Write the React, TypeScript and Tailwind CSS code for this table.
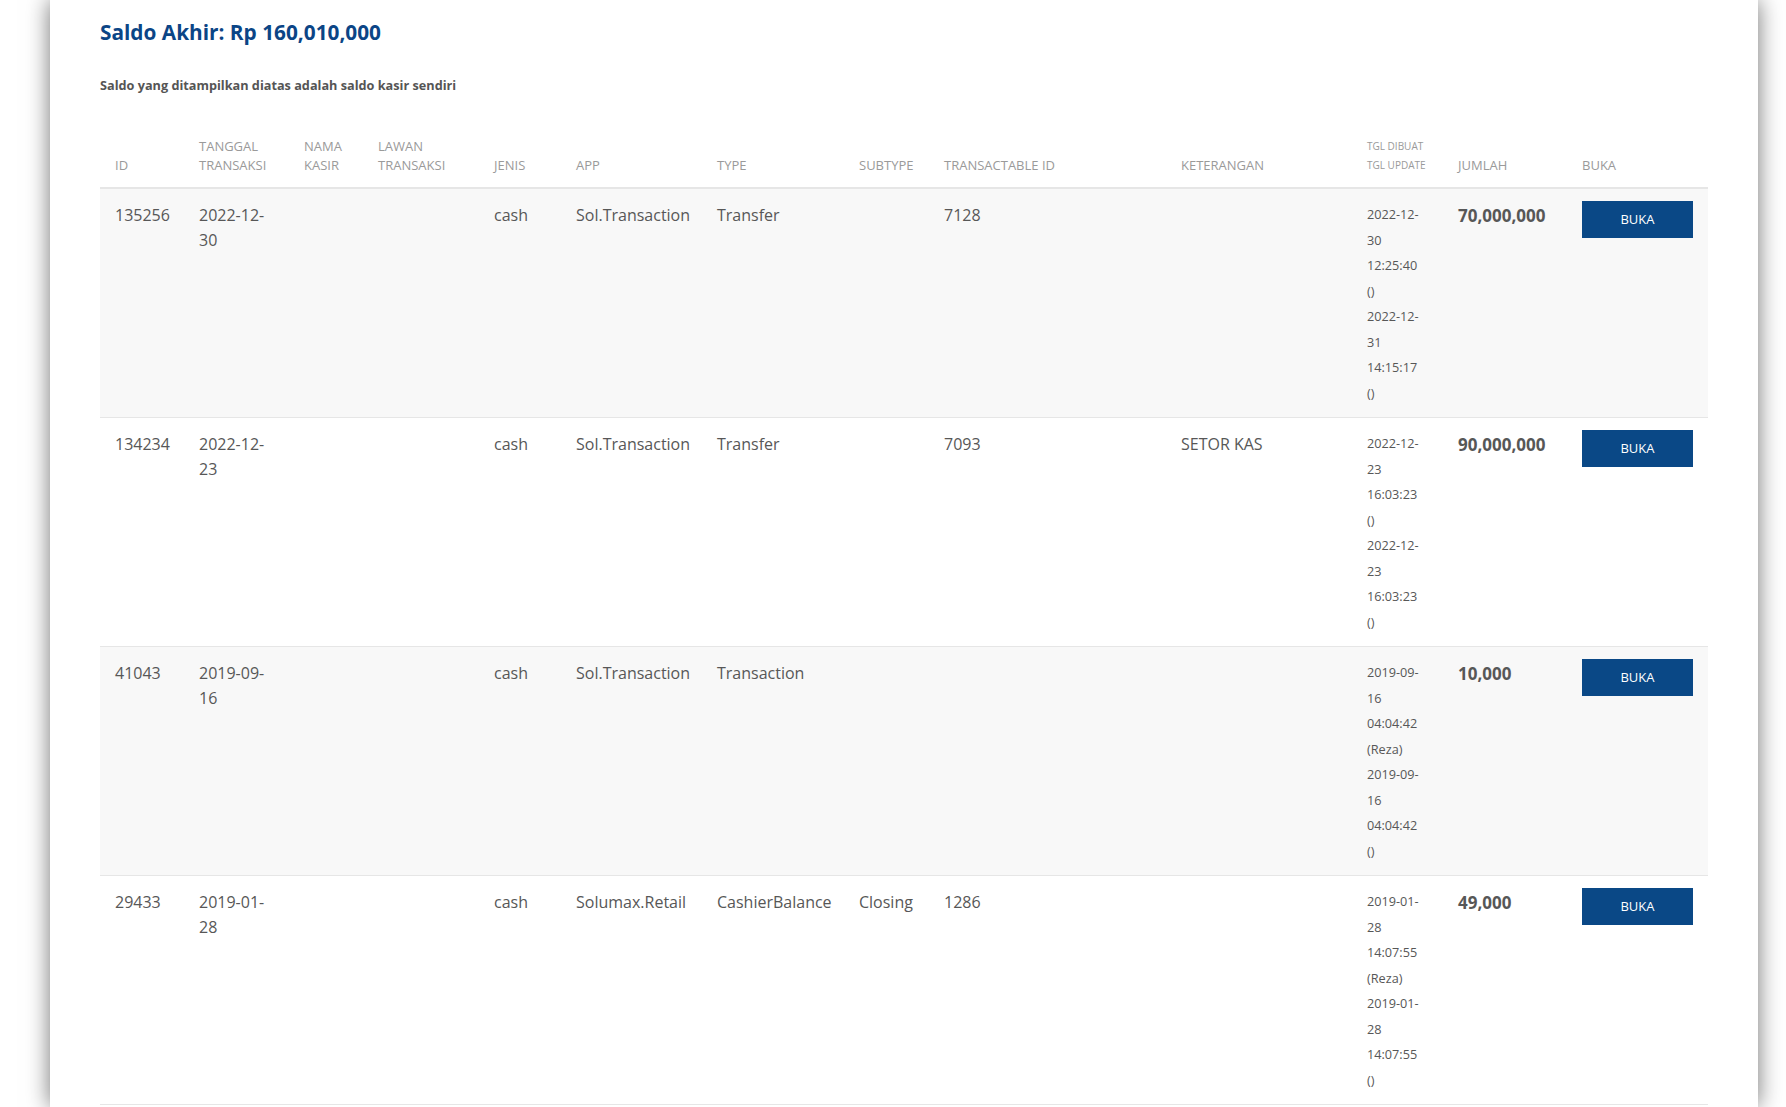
const font = { fontFamily: '"Open Sans", "Noto Sans", sans-serif' };

type Row = {
  id: string;
  tanggal: [string, string];
  jenis: string;
  app: string;
  type: string;
  subtype: string;
  transactableId: string;
  keterangan: string;
  tgl: string[];
  jumlah: string;
};

const rows: Row[] = [
  {
    id: '135256',
    tanggal: ['2022-12-', '30'],
    jenis: 'cash',
    app: 'Sol.Transaction',
    type: 'Transfer',
    subtype: '',
    transactableId: '7128',
    keterangan: '',
    tgl: ['2022-12-', '30', '12:25:40', '()', '2022-12-', '31', '14:15:17', '()'],
    jumlah: '70,000,000',
  },
  {
    id: '134234',
    tanggal: ['2022-12-', '23'],
    jenis: 'cash',
    app: 'Sol.Transaction',
    type: 'Transfer',
    subtype: '',
    transactableId: '7093',
    keterangan: 'SETOR KAS',
    tgl: ['2022-12-', '23', '16:03:23', '()', '2022-12-', '23', '16:03:23', '()'],
    jumlah: '90,000,000',
  },
  {
    id: '41043',
    tanggal: ['2019-09-', '16'],
    jenis: 'cash',
    app: 'Sol.Transaction',
    type: 'Transaction',
    subtype: '',
    transactableId: '',
    keterangan: '',
    tgl: ['2019-09-', '16', '04:04:42', '(Reza)', '2019-09-', '16', '04:04:42', '()'],
    jumlah: '10,000',
  },
  {
    id: '29433',
    tanggal: ['2019-01-', '28'],
    jenis: 'cash',
    app: 'Solumax.Retail',
    type: 'CashierBalance',
    subtype: 'Closing',
    transactableId: '1286',
    keterangan: '',
    tgl: ['2019-01-', '28', '14:07:55', '(Reza)', '2019-01-', '28', '14:07:55', '()'],
    jumlah: '49,000',
  },
];

const widths = [84, 105, 74, 116, 82, 141, 142, 85, 237, 186, 91, 124, 141];

function Th({ top, bottom, small = false }: { top?: string; bottom: string; small?: boolean }) {
  return (
    <th
      className={`px-[15px] pt-[8px] pb-[12px] text-left align-bottom font-normal uppercase leading-[19px] text-[#9a9a9a] ${
        small ? 'text-[10px]' : 'text-[13px]'
      }`}
    >
      {top && <div>{top}</div>}
      <div>{bottom}</div>
    </th>
  );
}

function Td({ children, className = '' }: { children?: React.ReactNode; className?: string }) {
  return (
    <td className={`px-[15px] pt-[14px] pb-[10px] align-top text-[16px] leading-[25px] text-[#575757] ${className}`}>
      {children}
    </td>
  );
}

export default function App() {
  return (
    <div className="min-h-screen bg-white" style={font}>
      <div className="ml-[50px] w-[1708px] min-h-[1107px] bg-white px-[50px] pt-[18px] shadow-[0_0_22px_rgba(0,0,0,0.55)]">
        <h2 className="text-[20.8px] font-bold leading-[28px] text-[#0b4586]">Saldo Akhir: Rp 160,010,000</h2>
        <p className="mt-[30px] text-[12.7px] font-bold leading-[18px] text-[#555555]">
          Saldo yang ditampilkan diatas adalah saldo kasir sendiri
        </p>

        <table className="mt-[35px] w-[1608px] table-fixed border-collapse">
          <colgroup>
            {widths.map((w, i) => (
              <col key={i} style={{ width: w }} />
            ))}
          </colgroup>
          <thead>
            <tr className="border-b-2 border-[#e6e6e6]">
              <Th bottom="ID" />
              <Th top="Tanggal" bottom="Transaksi" />
              <Th top="Nama" bottom="Kasir" />
              <Th top="Lawan" bottom="Transaksi" />
              <Th bottom="Jenis" />
              <Th bottom="App" />
              <Th bottom="Type" />
              <Th bottom="Subtype" />
              <Th bottom="Transactable ID" />
              <Th bottom="Keterangan" />
              <Th top="Tgl Dibuat" bottom="Tgl Update" small />
              <Th bottom="Jumlah" />
              <Th bottom="Buka" />
            </tr>
          </thead>
          <tbody>
            {rows.map((r, i) => (
              <tr key={r.id} className={`border-b border-[#e6e6e6] ${i % 2 === 0 ? 'bg-[#f8f8f8]' : 'bg-white'}`}>
                <Td>{r.id}</Td>
                <Td>
                  {r.tanggal[0]}
                  <br />
                  {r.tanggal[1]}
                </Td>
                <Td />
                <Td />
                <Td>{r.jenis}</Td>
                <Td>{r.app}</Td>
                <Td>{r.type}</Td>
                <Td>{r.subtype}</Td>
                <Td>{r.transactableId}</Td>
                <Td>{r.keterangan}</Td>
                <Td className="!pt-[13px] !pb-[11px] !text-[12.7px] !leading-[25.5px]">
                  {r.tgl.map((t, j) => (
                    <div key={j}>{t}</div>
                  ))}
                </Td>
                <Td className="!text-[17px] font-bold">{r.jumlah}</Td>
                <td className="px-[15px] pt-[12px] align-top">
                  <button className="flex h-[37px] w-full items-center justify-center bg-[#0a4886] text-[13px] text-white">
                    BUKA
                  </button>
                </td>
              </tr>
            ))}
          </tbody>
        </table>
      </div>
    </div>
  );
}
